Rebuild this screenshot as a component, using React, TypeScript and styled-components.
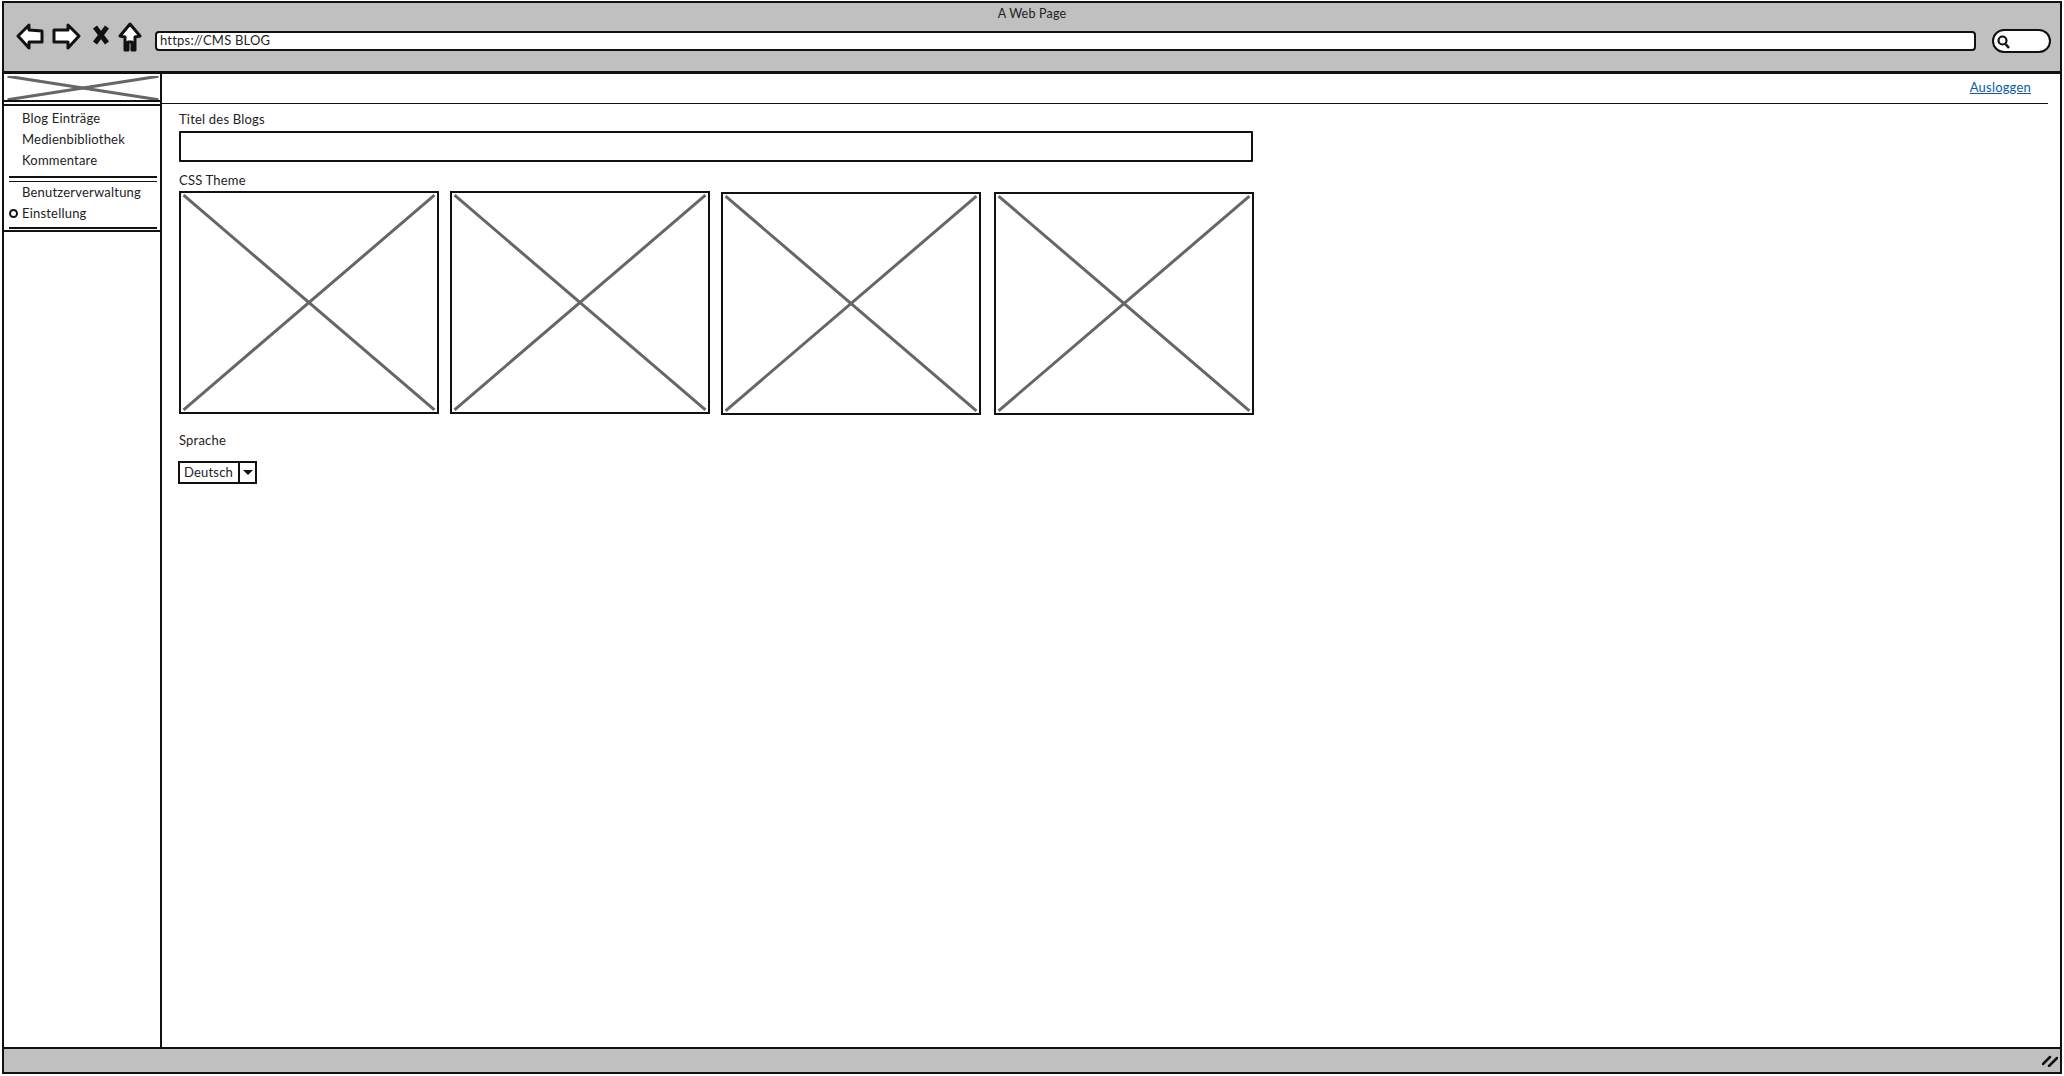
import { createGlobalStyle, styled } from 'styled-components'

const GlobalStyle = createGlobalStyle`
  html, body {
    margin: 0;
    padding: 0;
    background: #fff;
    overflow: hidden;
  }

  body {
    font-family: Lato, "Open Sans", sans-serif;
    font-size: 13px;
    letter-spacing: 0.2px;
    color: #222;
  }
`

const menuTop = ['Blog Einträge', 'Medienbibliothek', 'Kommentare']
const themes = [
  { lift: 0, shift: 0 },
  { lift: 0, shift: 11 },
  { lift: 1, shift: 11 },
  { lift: 1, shift: 13 },
]

const Placeholder = () => (
  <PlaceholderSvg>
    <line x1="1%" y1="1%" x2="99%" y2="99%" />
    <line x1="1%" y1="99%" x2="99%" y2="1%" />
  </PlaceholderSvg>
)

export default function App() {
  return (
    <Page>
      <GlobalStyle />
      <Window>
        <Toolbar>
          <PageTitle>A Web Page</PageTitle>
          <NavRow>
            <NavIcons>
              <svg width="28" height="28" viewBox="0 0 28 28">
                <path className="outline" d="M2 14 L13 3 L13 8 L26 9 L26 20 L13 20 L13 26 Z" />
              </svg>
              <svg width="29" height="28" viewBox="0 0 29 28">
                <path className="outline" d="M27 14 L16 3 L16 8 L2 8 L2 20 L16 20 L16 26 Z" />
              </svg>
              <CloseIcon width="18" height="22" viewBox="0 0 18 22">
                <path d="M3 3 L15 19 M15 3 L3 19" />
              </CloseIcon>
              <svg width="24" height="30" viewBox="0 0 24 30">
                <path className="outline" d="M12 2 L22 14 L17 15 L17 28 L14 28 L14 20 L10 20 L10 28 L7 28 L7 15 L2 14 Z" />
              </svg>
            </NavIcons>
            <UrlBar>https://CMS BLOG</UrlBar>
            <SearchBox>
              <svg width="15" height="15" viewBox="0 0 15 15">
                <circle cx="6.5" cy="6.5" r="4" fill="none" stroke="#111" strokeWidth="2.2" />
                <path d="M9.5 10 L13 14" stroke="#111" strokeWidth="2.5" />
              </svg>
            </SearchBox>
          </NavRow>
        </Toolbar>

        <Body>
          <Sidebar>
            <LogoBox>
              <Placeholder />
            </LogoBox>
            <Menu>
              {menuTop.map((item) => (
                <MenuItem key={item}>{item}</MenuItem>
              ))}
              <MenuDivider />
              <MenuItem>Benutzerverwaltung</MenuItem>
              <MenuItem>
                <RadioDot />
                Einstellung
              </MenuItem>
              <MenuEnd />
            </Menu>
          </Sidebar>

          <Main>
            <TopBar>
              <LogoutLink href="#">Ausloggen</LogoutLink>
            </TopBar>
            <Content>
              <FieldLabel>Titel des Blogs</FieldLabel>
              <TitleInput />
              <ThemeLabel>CSS Theme</ThemeLabel>
              <ThemeRow>
                {themes.map((theme, index) => (
                  <ThemeCard key={index} $lift={theme.lift} $shift={theme.shift}>
                    <Placeholder />
                  </ThemeCard>
                ))}
              </ThemeRow>
              <LanguageLabel>Sprache</LanguageLabel>
              <Select>
                <SelectValue>Deutsch</SelectValue>
                <SelectArrow />
              </Select>
            </Content>
          </Main>
        </Body>

        <StatusBar>
          <svg width="16" height="12" viewBox="0 0 16 12">
            <path d="M1 9 L8 2 M7 11 L15 3" stroke="#111" strokeWidth="2.5" strokeLinecap="round" />
          </svg>
        </StatusBar>
      </Window>
    </Page>
  )
}

const Page = styled.div`
  width: 2064px;
  height: 1076px;
  box-sizing: border-box;
  padding: 1px 2px 2px 2px;
`

const Window = styled.div`
  height: 100%;
  box-sizing: border-box;
  display: flex;
  flex-direction: column;
  border: 2px solid #111;
`

const Toolbar = styled.div`
  height: 71px;
  flex-shrink: 0;
  box-sizing: border-box;
  background: #c0c0c0;
  border-bottom: 3px solid #111;
  padding-top: 3px;
`

const PageTitle = styled.div`
  height: 16px;
  line-height: 16px;
  text-align: center;
  font-size: 12.5px;
`

const NavRow = styled.div`
  display: flex;
  align-items: flex-start;
  padding-left: 12px;
`

const NavIcons = styled.div`
  display: flex;
  align-items: flex-start;
  gap: 8px;
  width: 139px;
  flex-shrink: 0;

  .outline {
    fill: #fff;
    stroke: #111;
    stroke-width: 3;
    stroke-linejoin: round;
  }
`

const CloseIcon = styled.svg`
  margin: 2px 0 0 3px;

  path {
    fill: none;
    stroke: #111;
    stroke-width: 5;
  }
`

const UrlBar = styled.div`
  width: 1821px;
  height: 20px;
  box-sizing: border-box;
  flex-shrink: 0;
  margin-top: 9px;
  background: #fff;
  border: 2.5px solid #111;
  border-radius: 4px;
  padding-left: 3px;
  line-height: 15px;
  font-size: 13px;
`

const SearchBox = styled.div`
  width: 59px;
  height: 24px;
  box-sizing: border-box;
  flex-shrink: 0;
  margin: 7px 0 0 16px;
  background: #fff;
  border: 2.5px solid #111;
  border-radius: 12px;
  display: flex;
  align-items: center;
  padding-left: 2px;
`

const Body = styled.div`
  flex: 1;
  min-height: 0;
  display: flex;
`

const Sidebar = styled.div`
  width: 158px;
  flex-shrink: 0;
  box-sizing: border-box;
  border-right: 2.5px solid #111;
`

const LogoBox = styled.div`
  height: 28px;
  box-sizing: border-box;
  padding: 2px 0 0 2px;
  border-bottom: 2.5px solid #111;
  margin-bottom: 2px;
`

const PlaceholderSvg = styled.svg`
  display: block;
  width: 100%;
  height: 100%;

  line {
    stroke: #666;
    stroke-width: 3;
  }
`

const Menu = styled.div`
  height: 128px;
  box-sizing: border-box;
  border-bottom: 2.5px solid #111;
  border-top: 2px solid #111;
  padding-top: 2px;
`

const MenuItem = styled.div`
  position: relative;
  height: 21px;
  line-height: 21px;
  padding-left: 18px;
  font-size: 13px;
`

const MenuDivider = styled.div`
  height: 2.5px;
  margin: 5px 3px 0 5px;
  border-top: 2px solid #111;
  border-bottom: 1.5px solid #111;
`

const MenuEnd = styled.div`
  margin: 3px 3px 0 5px;
  border-top: 2px solid #111;
`

const RadioDot = styled.span`
  position: absolute;
  left: 5px;
  top: 6px;
  width: 9px;
  height: 9px;
  box-sizing: border-box;
  border: 2.5px solid #111;
  border-radius: 50%;
`

const Main = styled.div`
  flex: 1;
  min-width: 0;
`

const TopBar = styled.div`
  height: 30px;
  box-sizing: border-box;
  margin-right: 12px;
  padding: 0 17px 4px 0;
  border-bottom: 1.5px solid #111;
  display: flex;
  justify-content: flex-end;
  align-items: center;
`

const LogoutLink = styled.a`
  color: #0b5cad;
  font-size: 13px;
`

const Content = styled.div`
  padding-left: 17px;
`

const FieldLabel = styled.div`
  height: 16px;
  line-height: 16px;
  margin-top: 7px;
  font-size: 13px;
`

const TitleInput = styled.div`
  width: 1074px;
  height: 31px;
  box-sizing: border-box;
  margin-top: 4px;
  border: 2.5px solid #111;
  border-radius: 1px;
`

const ThemeLabel = styled(FieldLabel)`
  margin-top: 10px;
`

const ThemeRow = styled.div`
  display: flex;
  align-items: flex-start;
  margin-top: 3px;
`

const ThemeCard = styled.div<{ $lift: number; $shift: number }>`
  width: 260px;
  height: 223px;
  box-sizing: border-box;
  flex-shrink: 0;
  margin-top: ${(props) => props.$lift}px;
  margin-left: ${(props) => props.$shift}px;
  border: 2.5px solid #111;
`

const LanguageLabel = styled(FieldLabel)`
  margin-top: 17px;
`

const Select = styled.div`
  display: flex;
  width: 79px;
  height: 23px;
  box-sizing: border-box;
  margin: 13px 0 0 -1px;
  border: 2px solid #111;
`

const SelectValue = styled.div`
  flex: 1;
  line-height: 19px;
  padding-left: 4px;
  font-size: 13px;
  border-right: 2px solid #111;
`

const SelectArrow = styled.div`
  width: 15px;
  display: flex;
  align-items: center;
  justify-content: center;

  &::after {
    content: '';
    border-left: 5px solid transparent;
    border-right: 5px solid transparent;
    border-top: 5px solid #111;
  }
`

const StatusBar = styled.div`
  height: 25px;
  flex-shrink: 0;
  box-sizing: border-box;
  background: #c0c0c0;
  border-top: 2.5px solid #111;
  display: flex;
  justify-content: flex-end;
  align-items: center;
  padding-right: 2px;
`
